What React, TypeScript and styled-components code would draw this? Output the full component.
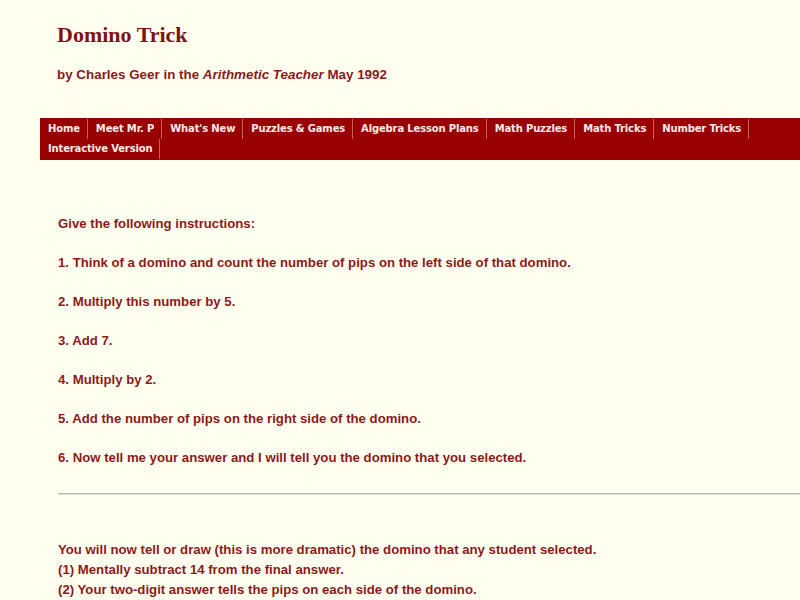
import styled, { createGlobalStyle } from 'styled-components';

const GlobalStyle = createGlobalStyle`
  html, body {
    margin: 0;
    padding: 0;
    background-color: #fffff0;
    overflow: hidden;
  }
`;

const Page = styled.div`
  width: 800px;
  height: 600px;
  overflow: hidden;
  background-color: #fffff0;
  color: #8b1a1a;
  font-family: "Liberation Sans", Arial, sans-serif;
  padding-left: 40px;
  box-sizing: border-box;
`;

const Header = styled.header`
  padding: 21px 0 0 17px;
  height: 118px;
  box-sizing: border-box;
`;

const Title = styled.h1`
  margin: 0;
  font-family: "Liberation Serif", "Times New Roman", serif;
  font-size: 22px;
  font-weight: 700;
  line-height: 28px;
  color: #7d1414;
`;

const Byline = styled.p`
  margin: 17px 0 0;
  font-size: 13.4px;
  font-weight: 700;
  line-height: 18px;
`;

const Nav = styled.nav`
  display: flex;
  flex-wrap: wrap;
  background-color: #990000;
  padding: 1px 0;
`;

const NavItem = styled.a`
  display: block;
  padding: 0 7px 0 8px;
  line-height: 20px;
  height: 20px;
  font-family: "DejaVu Sans", Verdana, sans-serif;
  font-size: 10px;
  font-weight: 700;
  letter-spacing: -0.15px;
  color: #fbeaea;
  text-decoration: none;
  border-right: 1px solid #c86060;
  white-space: nowrap;
`;

const NavBreak = styled.div`
  flex-basis: 100%;
  height: 0;
`;

const Content = styled.main`
  padding: 54px 0 0 18px;
`;

const Para = styled.p`
  margin: 0 0 19px;
  font-size: 13.2px;
  font-weight: 700;
  line-height: 20px;
`;

const Rule = styled.hr`
  margin: 25px -40px 0 0;
  border: none;
  border-top: 1px solid #b8b8b0;
  border-bottom: 1px solid #deded6;
`;

const Closing = styled.div`
  margin-top: 45px;
`;

const Line = styled.p`
  margin: 0;
  font-size: 13.2px;
  font-weight: 700;
  line-height: 20px;
`;

const navRow1 = [
  'Home',
  'Meet Mr. P',
  "What's New",
  'Puzzles & Games',
  'Algebra Lesson Plans',
  'Math Puzzles',
  'Math Tricks',
  'Number Tricks',
];

const steps = [
  'Give the following instructions:',
  '1. Think of a domino and count the number of pips on the left side of that domino.',
  '2. Multiply this number by 5.',
  '3. Add 7.',
  '4. Multiply by 2.',
  '5. Add the number of pips on the right side of the domino.',
  '6. Now tell me your answer and I will tell you the domino that you selected.',
];

function App() {
  return (
    <>
      <GlobalStyle />
      <Page>
        <Header>
          <Title>Domino Trick</Title>
          <Byline>
            by Charles Geer in the <i>Arithmetic Teacher</i> May 1992
          </Byline>
        </Header>
        <Nav>
          {navRow1.map((item) => (
            <NavItem key={item} href="#">
              {item}
            </NavItem>
          ))}
          <NavBreak />
          <NavItem href="#">Interactive Version</NavItem>
        </Nav>
        <Content>
          {steps.map((s) => (
            <Para key={s}>{s}</Para>
          ))}
          <Rule />
          <Closing>
            <Line>You will now tell or draw (this is more dramatic) the domino that any student selected.</Line>
            <Line>(1) Mentally subtract 14 from the final answer.</Line>
            <Line>(2) Your two-digit answer tells the pips on each side of the domino.</Line>
          </Closing>
        </Content>
      </Page>
    </>
  );
}

export default App;
